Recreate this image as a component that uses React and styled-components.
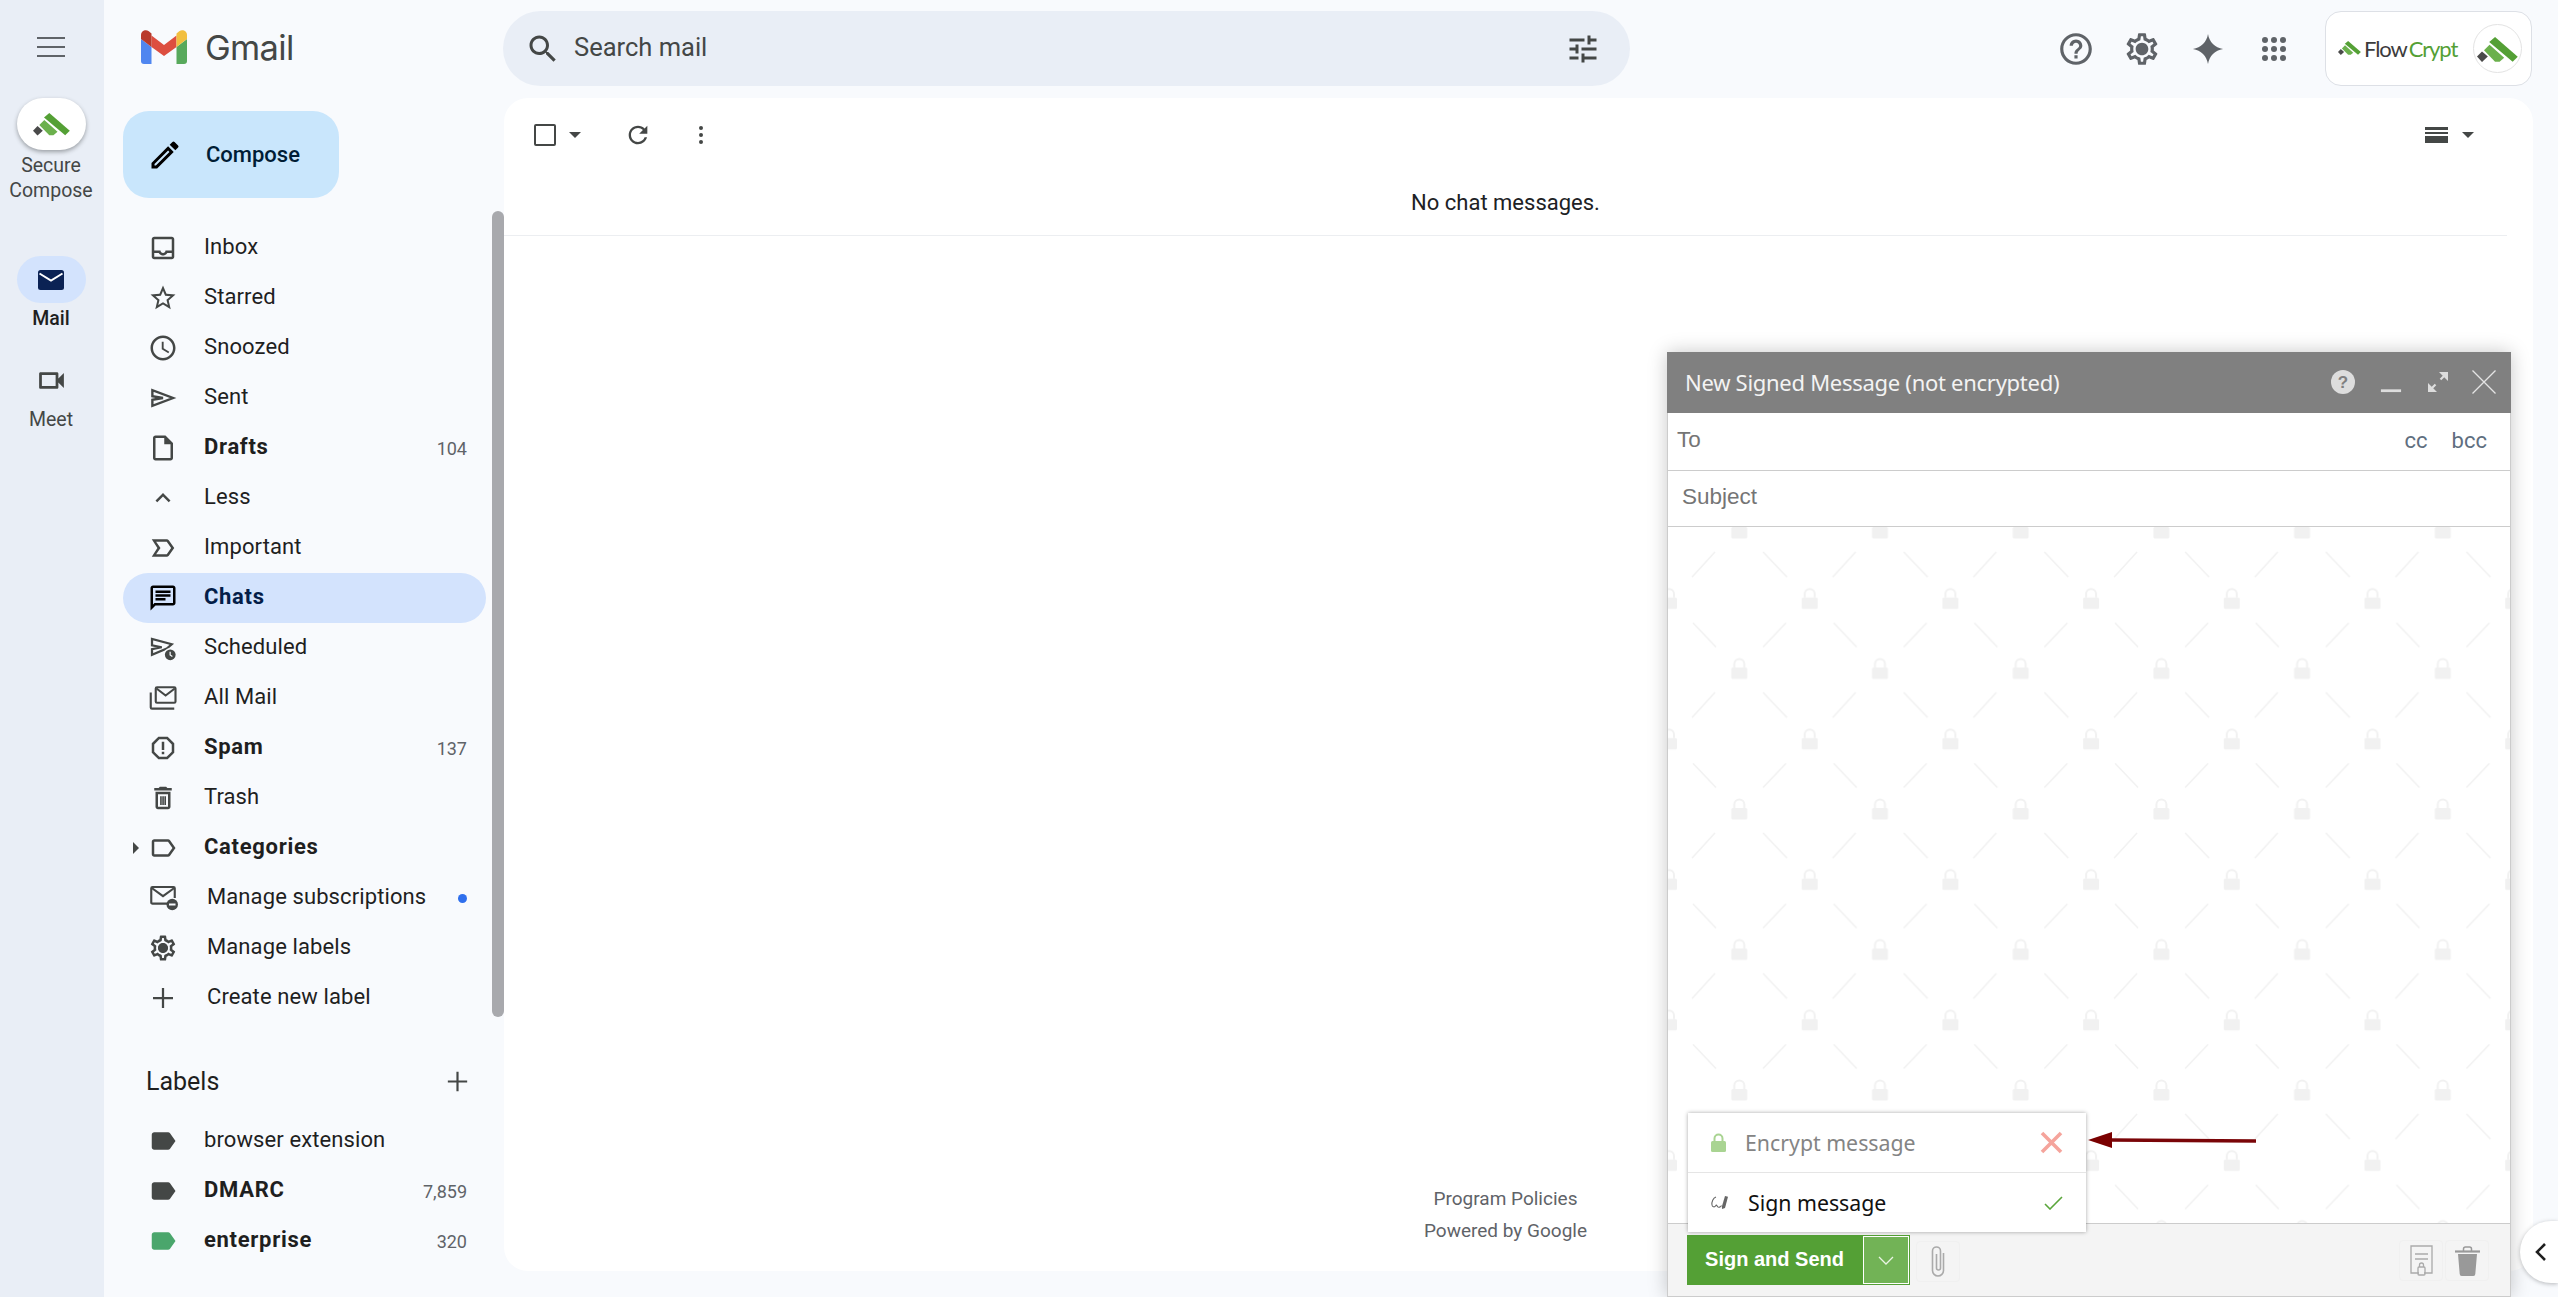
import React from "react";
import styled, { createGlobalStyle } from "styled-components";

const GlobalStyle = createGlobalStyle`
  html, body {
    margin: 0;
    padding: 0;
    height: 100%;
    overflow: hidden;
    background: #f8fafd;
  }
  * { box-sizing: border-box; }
`;

const paths = {
  inbox: "M19 3H5c-1.1 0-2 .9-2 2v14c0 1.1.9 2 2 2h14c1.1 0 2-.9 2-2V5c0-1.1-.9-2-2-2zm0 16H5v-3h3.56c.69 1.19 1.97 2 3.45 2s2.75-.81 3.44-2H19v3zm0-5h-4.99c0 1.1-.9 2-2 2s-2-.9-2-2H5V5h14v9z",
  star: "M22 9.24l-7.19-.62L12 2 9.19 8.63 2 9.24l5.46 4.73L5.82 21 12 17.27 18.18 21l-1.63-7.03L22 9.24zM12 15.4l-3.76 2.27 1-4.28-3.32-2.88 4.38-.38L12 6.1l1.71 4.04 4.38.38-3.32 2.88 1 4.28L12 15.4z",
  clock: "M11.99 2C6.47 2 2 6.48 2 12s4.47 10 9.99 10C17.52 22 22 17.52 22 12S17.52 2 11.99 2zM12 20c-4.42 0-8-3.58-8-8s3.58-8 8-8 8 3.58 8 8-3.58 8-8 8zm.5-13H11v6l5.25 3.15.75-1.23-4.5-2.67z",
  draft: "M14 2H6c-1.1 0-2 .9-2 2v16c0 1.1.9 2 2 2h12c1.1 0 2-.9 2-2V8l-6-6zm4 18H6V4h7v5h5v11z",
  less: "M12 8l-6 6 1.41 1.41L12 10.83l4.59 4.58L18 14z",
  important: "M15 19H3l4.5-7L3 5h12c.65 0 1.26.31 1.63.84L21 12l-4.37 6.16c-.37.52-.98.84-1.63.84zm-8.5-2H15l3.5-5L15 7H6.5l3.5 5-3.5 5z",
  chat: "M20 2H4c-1.1 0-2 .9-2 2v18l4-4h14c1.1 0 2-.9 2-2V4c0-1.1-.9-2-2-2zm0 14H5.17L4 17.17V4h16v12zM6 12h8v2H6zm0-3h12v2H6zm0-3h12v2H6z",
  spam: "M15.73 3H8.27L3 8.27v7.46L8.27 21h7.46L21 15.73V8.27L15.73 3zM19 14.9L14.9 19H9.1L5 14.9V9.1L9.1 5h5.8L19 9.1v5.8zM11 7h2v6.5h-2zM11 15h2v2h-2z",
  trash: "M16 9v10H8V9h8m-1.5-6h-5l-1 1H5v2h14V4h-3.5l-1-1zM18 7H6v12c0 1.1.9 2 2 2h8c1.1 0 2-.9 2-2V7zM9.7 10.5h1.3v7H9.7zM11.4 10.5h1.3v7h-1.3zM13.1 10.5h1.3v7h-1.3z",
  labelLine: "M17.63 5.84C17.27 5.33 16.67 5 16 5L5 5.01C3.9 5.01 3 5.9 3 7v10c0 1.1.9 1.99 2 1.99L16 19c.67 0 1.27-.33 1.63-.84L22 12l-4.37-6.16zM16 17H5V7h11l3.55 5L16 17z",
  labelFill: "M17.63 5.84C17.27 5.33 16.67 5 16 5L5 5.01C3.9 5.01 3 5.9 3 7v10c0 1.1.9 1.99 2 1.99L16 19c.67 0 1.27-.33 1.63-.84L22 12l-4.37-6.16z",
  settings: "M19.43 12.98c.04-.32.07-.64.07-.98 0-.34-.03-.66-.07-.98l2.11-1.65c.19-.15.24-.42.12-.64l-2-3.46c-.09-.16-.26-.25-.44-.25-.06 0-.12.01-.17.03l-2.49 1c-.52-.4-1.08-.73-1.69-.98l-.38-2.65C14.46 2.18 14.25 2 14 2h-4c-.25 0-.46.18-.49.42l-.38 2.65c-.61.25-1.17.59-1.69.98l-2.49-1c-.06-.02-.12-.03-.18-.03-.17 0-.34.09-.43.25l-2 3.46c-.13.22-.07.49.12.64l2.11 1.65c-.04.32-.07.65-.07.98 0 .33.03.66.07.98l-2.11 1.65c-.19.15-.24.42-.12.64l2 3.46c.09.16.26.25.44.25.06 0 .12-.01.17-.03l2.49-1c.52.4 1.08.73 1.69.98l.38 2.65c.03.24.24.42.49.42h4c.25 0 .46-.18.49-.42l.38-2.65c.61-.25 1.17-.59 1.69-.98l2.49 1c.06.02.12.03.18.03.17 0 .34-.09.43-.25l2-3.46c.12-.22.07-.49-.12-.64l-2.11-1.65zm-1.98-1.71c.04.31.05.52.05.73 0 .21-.02.43-.05.73l-.14 1.13.89.7 1.08.84-.7 1.21-1.27-.51-1.04-.42-.9.68c-.43.32-.84.56-1.25.73l-1.06.43-.16 1.13-.2 1.35h-1.4l-.19-1.35-.16-1.13-1.06-.43c-.43-.18-.83-.41-1.23-.71l-.91-.7-1.06.43-1.27.51-.7-1.21 1.08-.84.89-.7-.14-1.13c-.03-.31-.05-.54-.05-.74s.02-.43.05-.73l.14-1.13-.89-.7-1.08-.84.7-1.21 1.27.51 1.04.42.9-.68c.43-.32.84-.56 1.25-.73l1.06-.43.16-1.13.2-1.35h1.39l.19 1.35.16 1.13 1.06.43c.43.18.83.41 1.23.71l.91.7 1.06-.43 1.27-.51.7 1.21-1.07.85-.89.7.14 1.13zM12 8c-2.21 0-4 1.79-4 4s1.79 4 4 4 4-1.79 4-4-1.79-4-4-4z",
  help: "M11 18h2v-2h-2v2zm1-16C6.48 2 2 6.48 2 12s4.48 10 10 10 10-4.48 10-10S17.52 2 12 2zm0 18c-4.41 0-8-3.59-8-8s3.59-8 8-8 8 3.59 8 8-3.59 8-8 8zm0-14c-2.21 0-4 1.79-4 4h2c0-1.1.9-2 2-2s2 .9 2 2c0 2-3 1.75-3 5h2c0-2.25 3-2.5 3-5 0-2.21-1.79-4-4-4z",
  tune: "M3 17v2h6v-2H3zM3 5v2h10V5H3zm10 16v-2h8v-2h-8v-2h-2v6h2zM7 9v2H3v2h4v2h2V9H7zm14 4v-2H11v2h10zm-6-4h2V7h4V5h-4V3h-2v6z",
  search: "M15.5 14h-.79l-.28-.27C15.41 12.59 16 11.11 16 9.5 16 5.91 13.09 3 9.5 3S3 5.91 3 9.5 5.91 16 9.5 16c1.61 0 3.09-.59 4.23-1.57l.27.28v.79l5 4.99L20.49 19l-4.99-5zm-6 0C7.01 14 5 11.99 5 9.5S7.01 5 9.5 5 14 7.01 14 9.5 11.99 14 9.5 14z",
  refresh: "M17.65 6.35C16.2 4.9 14.21 4 12 4c-4.42 0-7.99 3.58-7.99 8s3.57 8 7.99 8c3.73 0 6.84-2.55 7.73-6h-2.08c-.82 2.33-3.04 4-5.65 4-3.31 0-6-2.69-6-6s2.69-6 6-6c1.66 0 3.14.69 4.22 1.78L13 11h7V4l-2.35 2.35z",
  edit: "M3 17.25V21h3.75L17.81 9.94l-3.75-3.75L3 17.25zM5.92 19H5v-.92l9.06-9.06.92.92L5.92 19zM20.71 7.04a.996.996 0 0 0 0-1.41l-2.34-2.34a1.002 1.002 0 0 0-1.41 0l-1.83 1.83 3.75 3.75 1.83-1.83z",
  video: "M17 10.5V7c0-.55-.45-1-1-1H4c-.55 0-1 .45-1 1v10c0 .55.45 1 1 1h12c.55 0 1-.45 1-1v-3.5l4 4v-11l-4 4zM15 16H5V8h10v8z",
  plus: "M20 12.9h-7.1V20h-1.8v-7.1H4v-1.8h7.1V4h1.8v7.1H20z",
  gem: "M12 2.5C12.8 7.6 16.4 11.2 21.5 12 16.4 12.8 12.8 16.4 12 21.5 11.2 16.4 7.6 12.8 2.5 12 7.6 11.2 11.2 7.6 12 2.5z",
};

const Glyph = styled.svg`
  display: block;
  flex: none;
  width: ${(p) => p.$size || 30}px;
  height: ${(p) => p.$size || 30}px;
  fill: ${(p) => p.$color || "#444746"};
`;

const Icon = ({ name, size, color }) => (
  <Glyph viewBox="0 0 24 24" $size={size} $color={color}>
    <path d={paths[name]} />
  </Glyph>
);

const SentIcon = () => (
  <Glyph viewBox="0 0 24 24">
    <path d="M3.500 5.800V10.600L12 12 3.500 13.400V18.200L20 12z" fill="none" stroke="#444746" strokeWidth="1.900" />
  </Glyph>
);

const ScheduledIcon = () => (
  <Glyph viewBox="0 0 24 24">
    <path d="M3.200 4.800V9.800L11 11.400 3.200 13V17.500L15 12.500 19 9z" fill="none" stroke="#444746" strokeWidth="1.800" />
    <circle cx="17.800" cy="17.400" r="5.400" fill="#f8fafd" />
    <circle cx="17.800" cy="17.400" r="4.300" />
    <path d="M17.700 15v2.600l1.800 1.200" fill="none" stroke="#f8fafd" strokeWidth="1" />
  </Glyph>
);

const AllMailIcon = () => (
  <Glyph viewBox="0 0 24 24">
    <g fill="none" stroke="#444746" strokeWidth="1.700">
      <rect x="6.200" y="3.400" width="15.800" height="12.400" rx="1" />
      <path d="M6.800 4.400l7.300 5.600 7.300-5.600M2.200 7.500v12a1 1 0 0 0 1 1h17.800" />
    </g>
  </Glyph>
);

const UnsubscribeIcon = () => (
  <Glyph viewBox="0 0 24 24">
    <g fill="none" stroke="#444746" strokeWidth="1.700">
      <path d="M17 16.500H3.600a1 1 0 0 1-1-1V4.200a1 1 0 0 1 1-1h16.800a1 1 0 0 1 1 1V12" />
      <path d="M3 4l9 6.500L21 4" />
    </g>
    <circle cx="19.400" cy="17.200" r="4.600" />
    <rect x="16.800" y="16.400" width="5.200" height="1.600" fill="#f8fafd" />
  </Glyph>
);

const GearFilledIcon = () => (
  <Glyph viewBox="0 0 24 24">
    <path d={paths.settings} />
    <circle cx="12" cy="12" r="3.800" />
  </Glyph>
);

const Mark = styled.svg`
  display: block;
  flex: none;
  width: ${(p) => p.$width}px;
`;

const BrandMark = ({ width }) => (
  <Mark viewBox="0 0 37 23" $width={width}>
    <path d="M16.300 0L36.800 17.800 32.200 22.300 11 4.600z" fill="#54a035" />
    <path d="M6.300 12L11.300 7 24.500 18.800 20.400 22.300H16.300z" fill="#6bb04c" />
    <path d="M0 17.700L4.500 13 9.800 17.700 4.500 22.600z" fill="#4a4a4a" />
  </Mark>
);

const LogoSvg = styled.svg`
  display: block;
  width: 46px;
  height: 34px;
`;

const GmailLogo = () => (
  <LogoSvg viewBox="0 0 46 34">
    <path d="M0 9L10.500 17V34H3a3 3 0 0 1-3-3z" fill="#5086f0" />
    <path d="M46 9L35.500 17V34H43a3 3 0 0 0 3-3z" fill="#58a95c" />
    <path d="M10.500 5.500L23 15 35.500 5.500V17L23 26 10.500 17z" fill="#dd4e40" />
    <path d="M0 9V5C0 1 4.500-1.200 7.800 1.200L10.500 3.500V17z" fill="#b93a2b" />
    <path d="M46 9V5C46 1 41.500-1.200 38.200 1.200L35.500 3.500V17z" fill="#f2bf3f" />
  </LogoSvg>
);

const Page = styled.div`
  position: relative;
  display: flex;
  width: 2558px;
  height: 1297px;
  overflow: hidden;
  background: #f8fafd;
  font-family: Roboto, "Liberation Sans", sans-serif;
  color: #202124;
`;

/* left rail */
const Rail = styled.aside`
  flex: none;
  width: 104px;
  padding-right: 2px;
  background: #e9eef6;
  display: flex;
  flex-direction: column;
  align-items: center;
`;

const Hamburger = styled.div`
  width: 28px;
  height: 98px;
  display: flex;
  flex-direction: column;
  justify-content: center;
  gap: 6.5px;
  padding-bottom: 4px;
  & span {
    display: block;
    height: 2.6px;
    background: #5f6368;
  }
`;

const RailPill = styled.div`
  width: 69px;
  height: ${(p) => p.$height || 47}px;
  margin-top: ${(p) => p.$top || 0}px;
  border-radius: 26px;
  display: flex;
  align-items: center;
  justify-content: center;
  background: ${(p) => p.$bg || "transparent"};
  box-shadow: ${(p) => (p.$raised ? "0 2px 4px rgba(60,64,67,.45)" : "none")};
`;

const RailLabel = styled.div`
  margin-top: 3px;
  font-size: 19.5px;
  line-height: 25px;
  text-align: center;
  color: ${(p) => (p.$active ? "#1f1f1f" : "#444746")};
  font-weight: ${(p) => (p.$active ? 500 : 400)};
`;

/* main column */
const Main = styled.div`
  flex: 1;
  min-width: 0;
  display: flex;
  flex-direction: column;
`;

const Topbar = styled.header`
  flex: none;
  height: 98px;
  display: flex;
  align-items: flex-start;
`;

const Brand = styled.div`
  flex: none;
  width: 399px;
  height: 94px;
  padding-left: 37px;
  display: flex;
  align-items: center;
  gap: 18px;
`;

const BrandName = styled.span`
  font-family: Inter, sans-serif;
  font-size: 34.5px;
  letter-spacing: -0.7px;
  color: #444746;
`;

const SearchBar = styled.div`
  flex: none;
  width: 1127px;
  height: 75px;
  margin-top: 11px;
  padding: 0 29px 0 22px;
  border-radius: 38px;
  background: #e9eef6;
  display: flex;
  align-items: center;
  gap: 13px;
`;

const SearchText = styled.span`
  flex: 1;
  padding-bottom: 3px;
  font-size: 25.5px;
  color: #444746;
`;

const TopIcons = styled.div`
  margin-left: auto;
  margin-top: 11px;
  padding-right: 26px;
  height: 75px;
  display: flex;
  align-items: center;
`;

const TopIcon = styled.div`
  width: 66px;
  display: flex;
  justify-content: center;
`;

const AppDots = styled.div`
  display: grid;
  grid-template-columns: repeat(3, 6px);
  grid-gap: 3px;
  & i {
    display: block;
    width: 6px;
    height: 6px;
    border-radius: 50%;
    background: #5f6368;
  }
`;

const BrandBox = styled.div`
  width: 207px;
  height: 75px;
  margin-left: 18px;
  padding: 0 9px 0 12px;
  border: 1px solid #dde0e6;
  border-radius: 16px;
  background: #fff;
  display: flex;
  align-items: center;
`;

const BrandWord = styled.span`
  margin-left: 3px;
  font-family: Lato, sans-serif;
  font-size: 22px;
  font-weight: 400;
  letter-spacing: -1.1px;
  color: #3c3c3c;
  & b {
    margin-left: 2px;
    font-weight: 400;
    color: #54a035;
  }
`;

const Avatar = styled.div`
  margin-left: auto;
  width: 49px;
  height: 49px;
  border: 1px solid #e3e3e3;
  border-radius: 50%;
  display: flex;
  align-items: center;
  justify-content: center;
  padding-top: 2px;
`;

const Content = styled.div`
  flex: 1;
  display: flex;
  min-height: 0;
`;

/* sidebar */
const Sidebar = styled.nav`
  position: relative;
  flex: none;
  width: 400px;
  padding: 13px 0 0 19px;
`;

const ComposeButton = styled.div`
  width: 216px;
  height: 87px;
  margin-bottom: 25px;
  padding-left: 24px;
  border-radius: 26px;
  background: #c9e6fc;
  display: flex;
  align-items: center;
  gap: 23px;
  font-size: 22px;
  font-weight: 500;
  color: #001d35;
`;

const NavRow = styled.div`
  position: relative;
  width: 363px;
  height: 50px;
  padding: 0 19px 0 25px;
  border-radius: 25px;
  background: ${(p) => (p.$active ? "#d3e3fd" : "transparent")};
  display: flex;
  align-items: center;
  font-size: 22px;
  letter-spacing: ${(p) => (p.$bold ? 0.7 : 0.1)}px;
  color: ${(p) => (p.$active ? "#041e49" : "#1f1f1f")};
  font-weight: ${(p) => (p.$bold ? 700 : 400)};
`;

const NavText = styled.span`
  flex: 1;
  margin-left: ${(p) => (p.$wide ? 29 : 26)}px;
  padding-bottom: 4px;
`;

const NavCount = styled.span`
  font-size: 18px;
  font-weight: 400;
  letter-spacing: 0;
  color: #5f6368;
`;

const NewDot = styled.span`
  width: 9px;
  height: 9px;
  border-radius: 50%;
  background: #2f6fed;
`;

const ExpandCaret = styled.span`
  position: absolute;
  left: 10px;
  top: 19px;
  border-left: 6px solid #444746;
  border-top: 6px solid transparent;
  border-bottom: 6px solid transparent;
`;

const LabelsHeader = styled.div`
  width: 363px;
  height: 50px;
  margin: 34px 0 9px;
  padding: 0 14px 2px 23px;
  display: flex;
  align-items: center;
  justify-content: space-between;
  font-size: 25px;
  font-weight: 400;
  color: #1f1f1f;
`;

const SideScroll = styled.div`
  position: absolute;
  left: 388px;
  top: 113px;
  width: 12px;
  height: 806px;
  border-radius: 6px;
  background: #a8a9ad;
`;

/* message panel */
const Panel = styled.section`
  flex: none;
  width: 2029px;
  height: 1173px;
  border-radius: 24px;
  background: #fff;
  display: flex;
  flex-direction: column;
  padding-right: 26px;
`;

const Toolbar = styled.div`
  flex: none;
  height: 74px;
  padding-left: 30px;
  display: flex;
  align-items: center;
`;

const CheckBox = styled.span`
  width: 22px;
  height: 22px;
  border: 2.4px solid #444746;
  border-radius: 2px;
`;

const Caret = styled.span`
  width: 0;
  height: 0;
  margin-left: ${(p) => p.$left || 0}px;
  border-left: 6px solid transparent;
  border-right: 6px solid transparent;
  border-top: 6px solid #444746;
`;

const ToolSlot = styled.span`
  margin-left: ${(p) => p.$left}px;
`;

const MoreDots = styled.span`
  width: 28px;
  display: flex;
  flex-direction: column;
  align-items: center;
  gap: 2.6px;
  & i {
    width: 4.6px;
    height: 4.6px;
    border-radius: 50%;
    background: #444746;
  }
`;

const Density = styled.span`
  margin-left: auto;
  width: 23px;
  height: 16px;
  border-top: 3px solid #444746;
  border-bottom: 7px solid #444746;
  background: linear-gradient(#fff 1.5px, #444746 1.5px, #444746 3.5px, #fff 3.5px);
`;

const DensityCaret = styled(Caret)`
  margin-right: 33px;
`;

const EmptyNote = styled.div`
  flex: none;
  height: 64px;
  padding-bottom: 2px;
  border-bottom: 1px solid #eceef1;
  display: flex;
  align-items: center;
  justify-content: center;
  font-size: 22px;
  color: #202124;
`;

const PanelFooter = styled.div`
  margin-top: auto;
  padding-bottom: 24px;
  text-align: center;
  font-size: 19px;
  line-height: 32px;
  color: #5f6368;
`;

/* compose window */
const ComposeWindow = styled.div`
  position: absolute;
  right: 47px;
  bottom: 0;
  width: 844px;
  height: 945px;
  background: #fff;
  border-left: 1px solid #ccc;
  border-right: 1px solid #ccc;
  border-bottom: 1px solid #ccc;
  box-shadow: 0 0 18px rgba(0, 0, 0, 0.22);
  display: flex;
  flex-direction: column;
`;

const WindowHeader = styled.div`
  flex: none;
  height: 61px;
  margin: 0 -1px;
  padding: 0 15px 2px 18px;
  background: #808080;
  display: flex;
  align-items: center;
  font-family: "Noto Sans", sans-serif;
  font-size: 22px;
  color: #f3f3f3;
`;

const WindowTitle = styled.span`
  flex: 1;
  letter-spacing: -0.28px;
`;

const HeaderBtn = styled.svg`
  display: block;
  margin-left: ${(p) => p.$left}px;
  width: ${(p) => p.$size}px;
  height: ${(p) => p.$size}px;
`;

const FieldRow = styled.div`
  flex: none;
  height: ${(p) => p.$height}px;
  padding: 0 23px 3px ${(p) => p.$left}px;
  border-bottom: 1px solid #ccc;
  display: flex;
  align-items: center;
  justify-content: space-between;
  font-family: "Liberation Sans", sans-serif;
  font-size: 22.5px;
  color: #757575;
`;

const CopyLinks = styled.div`
  display: flex;
  gap: 24px;
  font-family: Roboto, sans-serif;
  font-size: 22px;
  color: #5f6f80;
`;

const BodyArea = styled.div`
  position: relative;
  flex: 1;
  overflow: hidden;
`;

const Watermark = styled.svg`
  display: block;
  width: 100%;
  height: 100%;
`;

const SendMenu = styled.div`
  position: absolute;
  left: 20px;
  bottom: 64px;
  width: 398px;
  height: 119px;
  background: #fff;
  box-shadow: 0 0 4px rgba(0, 0, 0, 0.35);
  z-index: 2;
`;

const MenuRow = styled.div`
  height: ${(p) => p.$height}px;
  padding: 0 23px 0 23px;
  display: flex;
  align-items: center;
  border-bottom: ${(p) => (p.$line ? "1px solid #e5e5e5" : "none")};
  font-family: "Noto Sans", sans-serif;
  font-size: 21.3px;
  color: ${(p) => (p.$muted ? "#848484" : "#111")};
`;

const MenuText = styled.span`
  flex: 1;
  margin-left: ${(p) => p.$left}px;
  padding-bottom: 1px;
`;

const WindowFooter = styled.div`
  flex: none;
  height: 73px;
  padding: 11px 21px 0 19px;
  border-top: 1px solid #ccc;
  background: #f4f4f4;
  display: flex;
  align-items: flex-start;
`;

const SendButton = styled.div`
  width: 175px;
  height: 50px;
  padding-bottom: 2px;
  background: #54a035;
  display: flex;
  align-items: center;
  justify-content: center;
  font-family: "Liberation Sans", sans-serif;
  font-size: 20px;
  font-weight: 700;
  color: #fff;
`;

const SendToggle = styled.div`
  width: 48px;
  height: 50px;
  border: 1px solid #54a035;
  box-shadow: inset 0 0 0 1px #fff;
  background: #72b356;
  display: flex;
  align-items: center;
  justify-content: center;
`;

const ActionBox = styled.div`
  width: 44px;
  height: 41px;
  margin-top: ${(p) => p.$top || 0}px;
  margin-left: ${(p) => p.$left || 0}px;
  border: 1px solid #f0f0f0;
  border-radius: 4px;
  display: flex;
  align-items: center;
  justify-content: center;
`;

const Spacer = styled.div`
  flex: 1;
`;

const Annotation = styled.svg`
  position: absolute;
  left: 2085px;
  top: 1128px;
  width: 175px;
  height: 24px;
  z-index: 3;
`;

const SideHandle = styled.div`
  position: absolute;
  right: 0;
  top: 1221px;
  width: 38px;
  height: 62px;
  padding-left: 14px;
  border-radius: 31px 0 0 31px;
  background: #fff;
  box-shadow: 0 1px 4px rgba(60, 64, 67, 0.35);
  display: flex;
  align-items: center;
`;

const mainNav = [
  { icon: "inbox", text: "Inbox" },
  { icon: "star", text: "Starred" },
  { icon: "clock", text: "Snoozed" },
  { custom: <SentIcon />, text: "Sent" },
  { icon: "draft", text: "Drafts", bold: true, count: "104" },
  { icon: "less", text: "Less" },
  { icon: "important", text: "Important" },
  { icon: "chat", text: "Chats", bold: true, active: true },
  { custom: <ScheduledIcon />, text: "Scheduled" },
  { custom: <AllMailIcon />, text: "All Mail" },
  { icon: "spam", text: "Spam", bold: true, count: "137" },
  { icon: "trash", text: "Trash" },
  { icon: "labelLine", text: "Categories", bold: true, caret: true },
  { custom: <UnsubscribeIcon />, text: "Manage subscriptions", wide: true, dot: true },
  { custom: <GearFilledIcon />, text: "Manage labels", wide: true },
  { icon: "plus", text: "Create new label", wide: true },
];

const labelNav = [
  { color: "#444746", text: "browser extension" },
  { color: "#444746", text: "DMARC", bold: true, count: "7,859" },
  { color: "#4aa66c", text: "enterprise", bold: true, count: "320" },
];

const LockTile = ({ x, y }) => (
  <g transform={`translate(${x} ${y})`} fill="#f1f1f1">
    <rect x="-8" y="-1.500" width="16" height="11.500" rx="1.500" />
    <path d="M-5 -1.500v-3.500a5 5 0 0 1 10 0v3.500" fill="none" stroke="#f1f1f1" strokeWidth="2" />
  </g>
);

const BodyPattern = () => (
  <Watermark>
    <defs>
      <pattern id="locks" width="140.7" height="140.5" patternUnits="userSpaceOnUse" patternTransform="translate(1 0)">
        <LockTile x={0} y={72} />
        <LockTile x={140.7} y={72} />
        <LockTile x={70.3} y={1.5} />
        <LockTile x={70.3} y={142} />
        <path
          d="M23 50L46 25M94 25L118 50M24 96L47 120M117 96L94 120"
          stroke="#f1f1f1"
          strokeWidth="1.500"
          fill="none"
        />
      </pattern>
    </defs>
    <rect width="100%" height="100%" fill="url(#locks)" />
  </Watermark>
);

const App = () => {
  return (
    <Page>
      <GlobalStyle />
      <Rail>
        <Hamburger>
          <span />
          <span />
          <span />
        </Hamburger>
        <RailPill $height={52} $bg="#fff" $raised>
          <BrandMark width={37} />
        </RailPill>
        <RailLabel>
          Secure
          <br />
          Compose
        </RailLabel>
        <RailPill $top={53} $bg="#d3e3fd">
          <svg width="26" height="20" viewBox="0 0 26 20">
            <rect width="26" height="20" rx="2.500" fill="#0b2254" />
            <path d="M1.500 3.500L13 10.500 24.500 3.500" fill="none" stroke="#fff" strokeWidth="2" />
          </svg>
        </RailPill>
        <RailLabel $active>Mail</RailLabel>
        <RailPill $top={26}>
          <Icon name="video" size={33} />
        </RailPill>
        <RailLabel>Meet</RailLabel>
      </Rail>

      <Main>
        <Topbar>
          <Brand>
            <GmailLogo />
            <BrandName>Gmail</BrandName>
          </Brand>
          <SearchBar>
            <Icon name="search" size={36} />
            <SearchText>Search mail</SearchText>
            <Icon name="tune" size={36} />
          </SearchBar>
          <TopIcons>
            <TopIcon>
              <Icon name="help" size={38} color="#5f6368" />
            </TopIcon>
            <TopIcon>
              <Icon name="settings" size={38} color="#5f6368" />
            </TopIcon>
            <TopIcon>
              <Icon name="gem" size={38} color="#5f6368" />
            </TopIcon>
            <TopIcon>
              <AppDots>
                {Array.from({ length: 9 }).map((_, i) => (
                  <i key={i} />
                ))}
              </AppDots>
            </TopIcon>
            <BrandBox>
              <BrandMark width={23} />
              <BrandWord>
                Flow<b>Crypt</b>
              </BrandWord>
              <Avatar>
                <BrandMark width={41} />
              </Avatar>
            </BrandBox>
          </TopIcons>
        </Topbar>

        <Content>
          <Sidebar>
            <ComposeButton>
              <Icon name="edit" size={36} color="#000" />
              Compose
            </ComposeButton>
            {mainNav.map((item) => (
              <NavRow key={item.text} $active={item.active} $bold={item.bold}>
                {item.caret && <ExpandCaret />}
                {item.custom || (
                  <Icon name={item.icon} color={item.active ? "#000" : "#444746"} />
                )}
                <NavText $wide={item.wide}>{item.text}</NavText>
                {item.count && <NavCount>{item.count}</NavCount>}
                {item.dot && <NewDot />}
              </NavRow>
            ))}
            <LabelsHeader>
              Labels
              <Icon name="plus" size={29} />
            </LabelsHeader>
            {labelNav.map((item) => (
              <NavRow key={item.text} $bold={item.bold}>
                <Icon name="labelFill" color={item.color} />
                <NavText>{item.text}</NavText>
                {item.count && <NavCount>{item.count}</NavCount>}
              </NavRow>
            ))}
            <SideScroll />
          </Sidebar>

          <Panel>
            <Toolbar>
              <CheckBox />
              <Caret $left={13} />
              <ToolSlot $left={43}>
                <Icon name="refresh" size={28} />
              </ToolSlot>
              <ToolSlot $left={35}>
                <MoreDots>
                  <i />
                  <i />
                  <i />
                </MoreDots>
              </ToolSlot>
              <Density />
              <DensityCaret $left={14} />
            </Toolbar>
            <EmptyNote>No chat messages.</EmptyNote>
            <PanelFooter>
              Program Policies
              <br />
              Powered by Google
            </PanelFooter>
          </Panel>
        </Content>
      </Main>

      <ComposeWindow>
        <WindowHeader>
          <WindowTitle>New Signed Message (not encrypted)</WindowTitle>
          <HeaderBtn viewBox="0 0 24 24" $size={24} $left={0}>
            <circle cx="12" cy="12" r="12" fill="#ddd" />
            <text x="12" y="18" fontSize="17" fontWeight="700" textAnchor="middle" fill="#808080" fontFamily="Liberation Sans">?</text>
          </HeaderBtn>
          <HeaderBtn viewBox="0 0 22 24" $size={22} $left={25}>
            <rect y="20" width="22" height="3" fill="#ddd" />
          </HeaderBtn>
          <HeaderBtn viewBox="0 0 22 22" $size={22} $left={25}>
            <path d="M8.500 13.500L3 19M13.500 8.500L19 3" stroke="#ddd" strokeWidth="2.200" />
            <path d="M1 12v9h9zM21 10V1h-9z" fill="#ddd" />
          </HeaderBtn>
          <HeaderBtn viewBox="0 0 24 24" $size={24} $left={23}>
            <path d="M.5.5l23 23M23.5.5l-23 23" stroke="#e4e4e4" strokeWidth="1.300" />
          </HeaderBtn>
        </WindowHeader>
        <FieldRow $height={58} $left={9}>
          <span>To</span>
          <CopyLinks>
            <span>cc</span>
            <span>bcc</span>
          </CopyLinks>
        </FieldRow>
        <FieldRow $height={56} $left={14}>
          <span>Subject</span>
        </FieldRow>
        <BodyArea>
          <BodyPattern />
        </BodyArea>
        <SendMenu>
          <MenuRow $height={60} $line $muted>
            <svg width="15" height="19" viewBox="0 0 15 19">
              <rect y="8" width="15" height="11" rx="1.500" fill="#a9d492" />
              <path d="M3.500 8V5.500a4 4 0 0 1 8 0V8" fill="none" stroke="#a9d492" strokeWidth="2" />
            </svg>
            <MenuText $left={19}>Encrypt message</MenuText>
            <svg width="23" height="23" viewBox="0 0 23 23">
              <path d="M2 2l19 19M21 2L2 21" stroke="#f5a49c" strokeWidth="3.600" />
            </svg>
          </MenuRow>
          <MenuRow $height={59}>
            <svg width="18" height="16" viewBox="0 0 18 16">
              <path d="M5 2C2 3 .5 7 1 10c.3 2 2.500 2.500 3.500 1 1-1.500 1-1 2 .5 1 1.500 3 .5 4-1" fill="none" stroke="#666" strokeWidth="1.100" />
              <path d="M14 1l3 .8-3 11.200-3 1-.1-2.500z" fill="#666" />
            </svg>
            <MenuText $left={19}>Sign message</MenuText>
            <svg width="19" height="14" viewBox="0 0 19 14">
              <path d="M1 8l5 5L18 1" fill="none" stroke="#5aa63b" strokeWidth="1.600" />
            </svg>
          </MenuRow>
        </SendMenu>
        <WindowFooter>
          <SendButton>Sign and Send</SendButton>
          <SendToggle>
            <svg width="16" height="9" viewBox="0 0 16 9">
              <path d="M1 1l7 7 7-7" fill="none" stroke="#eaf4e4" strokeWidth="1.300" />
            </svg>
          </SendToggle>
          <ActionBox $left={6} $top={6}>
            <svg width="16" height="33" viewBox="0 0 16 33">
              <path d="M13.500 8v17.500a5.500 5.500 0 0 1-11 0V6a4 4 0 0 1 8 0v17a2 2 0 0 1-4 0V9" fill="none" stroke="#aaa" strokeWidth="1.600" />
            </svg>
          </ActionBox>
          <Spacer />
          <ActionBox $top={5}>
            <svg width="23" height="31" viewBox="0 0 23 31">
              <path d="M9 28H1V1h21v27h-8" fill="none" stroke="#aaa" strokeWidth="1.300" />
              <path d="M5 9h13M5 14h13" stroke="#aaa" strokeWidth="1.300" />
              <rect x="8" y="22" width="7" height="8" rx="1" fill="none" stroke="#aaa" strokeWidth="1.300" />
              <path d="M9.500 22v-2a2 2 0 0 1 4 0v2" fill="none" stroke="#aaa" strokeWidth="1.300" />
            </svg>
          </ActionBox>
          <ActionBox $top={5} $left={2}>
            <svg width="25" height="30" viewBox="0 0 25 30">
              <path d="M3 8h19l-1.700 20a2 2 0 0 1-2 2H6.700a2 2 0 0 1-2-2z" fill="#999" />
              <path d="M0 5.500h25" stroke="#999" strokeWidth="2.200" />
              <path d="M8.500 5V3a2 2 0 0 1 2-2h4a2 2 0 0 1 2 2v2" fill="none" stroke="#999" strokeWidth="1.500" />
            </svg>
          </ActionBox>
        </WindowFooter>
      </ComposeWindow>

      <Annotation viewBox="0 0 175 24">
        <path d="M26 12L171 13" stroke="#7a0508" strokeWidth="3.400" />
        <path d="M3 12L27 4V20z" fill="#7a0000" />
      </Annotation>

      <SideHandle>
        <svg width="13" height="20" viewBox="0 0 13 20">
          <path d="M11 2L3 10l8 8" fill="none" stroke="#1f1f1f" strokeWidth="2.600" />
        </svg>
      </SideHandle>
    </Page>
  );
};

export default App;
